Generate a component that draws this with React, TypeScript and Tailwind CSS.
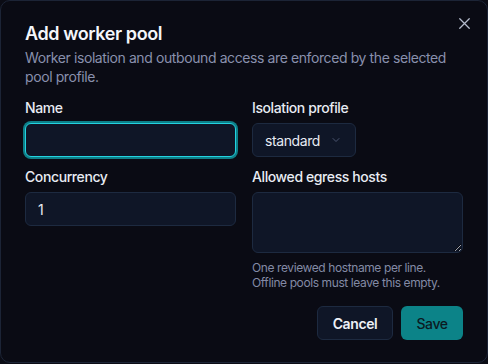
import React from "react";

export default function App() {
  return (
    <div className="w-[488px] h-[364px] bg-[#0b0c15] font-['Inter',sans-serif] tracking-[-0.025em]">
      <div className="relative w-[488px] h-[363px] rounded-[10px] border border-[#1c2436] bg-[#0a0b14] px-6 pt-[19px]">
        <button className="absolute right-[13px] top-[13px] text-[#b4bbcc]">
          <svg width="19" height="19" viewBox="0 0 24 24" fill="none" stroke="currentColor" strokeWidth="1.6" strokeLinecap="round">
            <path d="M6 6l12 12M18 6L6 18" />
          </svg>
        </button>
        <h2 className="text-[18px] leading-[28px] font-semibold text-[#f4f6fb]">Add worker pool</h2>
        <p className="mt-0 text-[14px] leading-[19px] text-[#8990ad]">
          Worker isolation and outbound access are enforced by the selected pool profile.
        </p>
        <div className="mt-[12px] grid grid-cols-2 gap-x-4">
          <div>
            <label className="block text-[14px] leading-[20px] font-medium text-[#e8ebf3]">Name</label>
            <input className="mt-[5px] block h-[34px] w-full rounded-[6px] border border-[#22d3e0] bg-[#0f1627] px-3 text-[14px] text-[#e8ebf3] outline-none ring-2 ring-[#0e7f88]" />
          </div>
          <div>
            <label className="block text-[14px] leading-[20px] font-medium text-[#e8ebf3]">Isolation profile</label>
            <div className="mt-[5px] flex h-[34px] w-[104px] items-center rounded-[6px] border border-[#1d2a40] bg-[#0f1627] pl-3">
              <span className="text-[14px] text-[#e8ebf3]">standard</span>
              <svg className="ml-[10px]" width="12" height="12" viewBox="0 0 24 24" fill="none" stroke="#4b5570" strokeWidth="2" strokeLinecap="round" strokeLinejoin="round">
                <path d="M6 9l6 6 6-6" />
              </svg>
            </div>
          </div>
          <div className="mt-[10px]">
            <label className="block text-[14px] leading-[20px] font-medium text-[#e8ebf3]">Concurrency</label>
            <div className="mt-[5px] flex h-[34px] w-full items-center rounded-[6px] border border-[#1d2a40] bg-[#0f1627] px-3 text-[14px] text-[#e8ebf3]">
              1
            </div>
          </div>
          <div className="mt-[10px]">
            <label className="block text-[14px] leading-[20px] font-medium text-[#e8ebf3]">Allowed egress hosts</label>
            <textarea className="mt-[5px] block h-[61px] w-full rounded-[6px] border border-[#1d2a40] bg-[#0f1627] px-3 py-2 text-[14px] text-[#e8ebf3] outline-none resize-y" />
            <p className="mt-[7px] text-[12px] leading-[15px] text-[#838aa5]">
              One reviewed hostname per line.
              <br />
              Offline pools must leave this empty.
            </p>
          </div>
        </div>
        <div className="mt-[16px] flex justify-end gap-2">
          <button className="h-[34px] w-[76px] rounded-[6px] border border-[#1d2a40] bg-[#0f1627] text-[14px] font-semibold text-[#eef1f7]">
            Cancel
          </button>
          <button className="h-[34px] w-[62px] rounded-[6px] bg-[#0c8388] text-[14px] font-medium text-[#0b1a22]">
            Save
          </button>
        </div>
      </div>
    </div>
  );
}
